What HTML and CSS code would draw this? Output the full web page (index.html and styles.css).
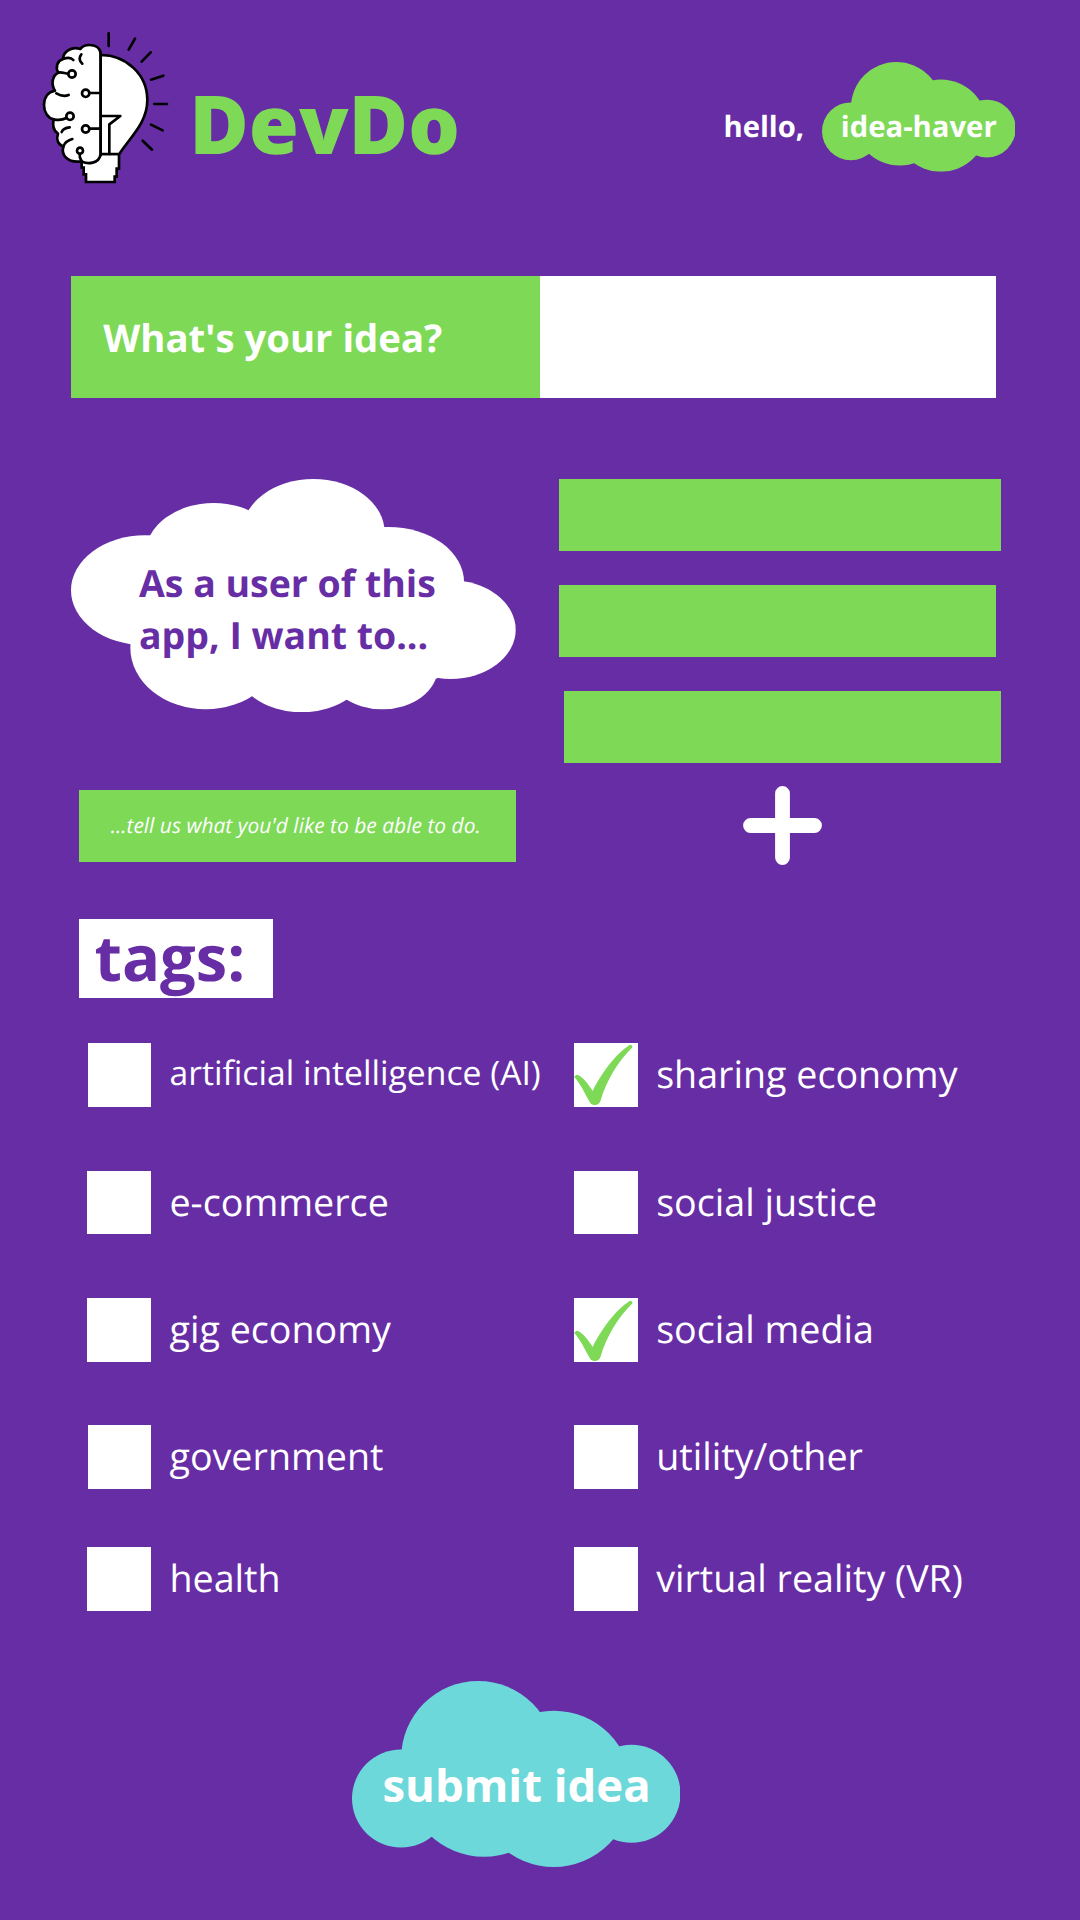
FILE: index.html
```
<!DOCTYPE html>
<html lang="en">
<head>
<meta charset="utf-8">
<title>DevDo</title>
<link rel="stylesheet" href="styles.css">
</head>
<body>
<svg class="defs" aria-hidden="true">
  <symbol id="cloud" viewBox="34.500 33 986 558">
    <circle cx="181.500" cy="385.500" r="147"/>
    <circle cx="413" cy="264" r="231"/>
    <circle cx="639.500" cy="356.500" r="234.500"/>
    <circle cx="873" cy="371.500" r="147"/>
    <circle cx="430" cy="325" r="235"/>
  </symbol>
  <symbol id="tick" viewBox="0 0 192 192">
    <path d="M0 101L6 97Q10 94 14 97C29 106 44 125 56 144C78 98 122 35 167 6Q170 4 172 6L175 10Q176 12 174 14C131 56 99 111 82 165C79 179 74 186 61 186C51 186 47 177 42 168C30 145 17 119 0 101Z"/>
  </symbol>
</svg>
<header class="header">
  <svg class="logo" viewBox="0 0 450 525" aria-hidden="true">
    <g fill="#fff" stroke="#000" stroke-width="8" stroke-linecap="round" stroke-linejoin="round">
      <path stroke-linejoin="miter" d="M155 420V443H161V463H168V486H254V470H260V446H267V402H212Z"/>
      <path d="M212 105C290 105 352 165 352 240C352 310 298 354 268 402H212Z"/>
      <path d="M212 100C210 84 196 75 178 75C167 75 157 79 151 87C126 79 100 93 99 117C82 122 75 142 85 158C67 166 62 193 75 212C53 216 42 234 42 255C42 277 54 294 71 298C67 317 71 333 84 341C78 358 84 373 100 380C93 404 111 430 155 424C172 433 207 433 212 402Z"/>
      <path fill="none" d="M99 117C113 112 124 113 130 120M154 103C146 113 147 122 157 131M85 158C92 155 104 160 114 161M79 220C91 227 103 230 116 225M71 298C84 301 98 300 109 294M95 336C99 326 108 323 119 322M100 380C103 369 113 361 127 357M149 403C148 411 151 418 155 424M179 219H211M179 326H211M213 288H271L238 313V402"/>
      <circle cx="126" cy="162" r="11"/>
      <circle cx="167" cy="220" r="11"/>
      <circle cx="120" cy="289" r="11"/>
      <circle cx="167" cy="327" r="11"/>
      <circle cx="150" cy="392" r="9"/>
      <path fill="none" d="M212 100V406"/>
      <path fill="none" d="M236 40V78M315 56L296 89M362 97L335 125M400 167L363 179M373 252H411M363 314L398 331M338 362L366 389"/>
    </g>
  </svg>
  <h1 class="brand">DevDo</h1>
  <p class="hello">hello,</p>
  <div class="user">
    <svg class="cloud cloud-user" aria-hidden="true"><use href="#cloud"/></svg>
    <span class="user-name">idea-haver</span>
  </div>
</header>
<main>
  <section class="idea">
    <label class="idea-label" for="idea">What's your idea?</label>
    <input class="idea-input" id="idea" type="text">
  </section>

  <section class="stories">
    <div class="prompt">
      <div class="bubble">
        <svg class="bubble-shape" viewBox="33 27 1334 700" preserveAspectRatio="none" aria-hidden="true">
          <path d="M269 196L569 123L973 171L1212 333L1132 625L858 689L574 677L211 523Z"/>
          <ellipse cx="255" cy="361" rx="222" ry="165"/>
          <ellipse cx="461" cy="251" rx="204" ry="152"/>
          <ellipse cx="760" cy="188" rx="214" ry="161"/>
          <ellipse cx="985" cy="336" rx="227" ry="165"/>
          <ellipse cx="1172" cy="479" rx="195" ry="148"/>
          <ellipse cx="437" cy="533" rx="226" ry="185"/>
          <ellipse cx="725" cy="577" rx="202" ry="150"/>
          <ellipse cx="967" cy="594" rx="166" ry="124"/>
        </svg>
        <p class="bubble-text">As a user of this<br>app, I want to...</p>
      </div>
      <div class="hint">...tell us what you'd like to be able to do.</div>
    </div>
    <div class="answers">
      <div class="answer"></div>
      <div class="answer answer-short"></div>
      <div class="answer answer-inset"></div>
      <svg class="plus" viewBox="0 0 79 79" role="img" aria-label="Add another">
        <path d="M39.500 7.500V71.500M7.500 39.500H71.500" stroke="#fff" stroke-width="14.800" stroke-linecap="round"/>
      </svg>
    </div>
  </section>

  <h2 class="tags-title">tags:</h2>
  <section class="tags">
    <div class="tag"><span class="box box-narrow"></span><span class="name name-small">artificial intelligence (AI)</span></div>
    <div class="tag"><span class="box"><svg class="tick"><use href="#tick"/></svg></span><span class="name">sharing economy</span></div>
    <div class="tag"><span class="box"></span><span class="name">e-commerce</span></div>
    <div class="tag"><span class="box"></span><span class="name">social justice</span></div>
    <div class="tag"><span class="box"></span><span class="name">gig economy</span></div>
    <div class="tag"><span class="box"><svg class="tick tick-low"><use href="#tick"/></svg></span><span class="name">social media</span></div>
    <div class="tag"><span class="box box-narrow"></span><span class="name">government</span></div>
    <div class="tag"><span class="box"></span><span class="name">utility/other</span></div>
    <div class="tag"><span class="box"></span><span class="name">health</span></div>
    <div class="tag"><span class="box"></span><span class="name">virtual reality (VR)</span></div>
  </section>

  <button class="submit" type="button">
    <svg class="cloud cloud-submit" aria-hidden="true"><use href="#cloud"/></svg>
    <span class="submit-text">submit idea</span>
  </button>
</main>
</body>
</html>
```
FILE: styles.css
```
* { box-sizing: border-box; margin: 0; padding: 0; }

body {
  width: 1080px;
  height: 1920px;
  overflow: hidden;
  background: #672da5;
  color: #fff;
  font-family: "Open Sans", sans-serif;
  text-rendering: geometricPrecision;
}

svg { display: block; }
.defs { position: absolute; width: 0; height: 0; }

/* Header */
.header {
  display: flex;
  align-items: flex-start;
  height: 276px;
  padding-left: 30px;
}
.logo { width: 150px; height: 175px; margin-top: 20px; }
.brand {
  width: 543.5px;
  padding: 68px 0 0 9.2px;
  color: #7ed957;
  font-size: 81.2px;
  font-weight: 800;
  line-height: 110px;
}
.hello {
  width: 98px;
  padding-top: 106px;
  font-size: 29.2px;
  font-weight: 700;
  line-height: 40px;
}
.user { display: grid; padding-top: 62px; }
.user > * { grid-area: 1 / 1; }
.cloud-user { width: 193.800px; height: 109.700px; fill: #7ed957; }
.user-name {
  padding: 44px 0 0 19.3px;
  font-size: 29.25px;
  font-weight: 700;
  line-height: 40px;
}

/* Idea field */
.idea {
  display: flex;
  height: 122px;
  margin-left: 70.7px;
}
.idea-label {
  width: 469.3px;
  padding: 1px 0 0 32.6px;
  background: #7ed957;
  font-size: 38.3px;
  font-weight: 700;
  line-height: 122px;
}
.idea-input { width: 456px; border: 0; background: #fff; }

/* User stories */
.stories {
  display: flex;
  margin: 81px 0 0 71px;
  height: 439.5px;
}
.prompt { width: 488.3px; }
.bubble { display: grid; height: 233.3px; }
.bubble > * { grid-area: 1 / 1; }
.bubble-shape { width: 444.7px; height: 233.3px; fill: #fff; }
.bubble-text {
  padding: 77.5px 0 0 68px;
  color: #672da5;
  font-size: 37.45px;
  font-weight: 700;
  line-height: 52px;
}
.hint {
  width: 437px;
  height: 72px;
  margin: 77.5px 0 0 8px;
  padding: .5px 0 0 31.7px;
  background: #7ed957;
  font-size: 20.97px;
  font-style: italic;
  line-height: 72px;
}
.answers { width: 442px; }
.answer { height: 72px; margin-bottom: 34px; background: #7ed957; }
.answer-short { width: 437px; margin-bottom: 33.5px; }
.answer-inset { width: 437px; margin: 0 0 23.5px 5px; }
.plus { width: 79px; height: 79px; margin-left: 183.7px; }

/* Tags */
.tags-title {
  width: 194px;
  height: 79.5px;
  margin-left: 79px;
  padding-left: 15.5px;
  background: #fff;
  color: #672da5;
  font-size: 63.2px;
  font-weight: 700;
  line-height: 75px;
}
.tags {
  display: grid;
  grid-template-columns: 486.7px 1fr;
  grid-template-rows: 127.5px 127.5px 127px 122px 63.6px;
  margin: 45px 0 0 87.3px;
}
.tag { display: flex; gap: 18.5px; height: 63.6px; }
.box { width: 63.7px; height: 63.6px; background: #fff; }
.box-narrow { width: 63px; margin-left: .7px; }
.tick { width: 64px; height: 64px; fill: #7ed957; }
.tick-low { margin-top: 1.2px; }
.name {
  margin-top: .2px;
  font-size: 37.65px;
  line-height: 63.6px;
  white-space: nowrap;
}
.name-small { margin-top: -2px; font-size: 33.7px; }

/* Submit */
.submit {
  display: grid;
  margin: 70.4px 0 0 351.5px;
  border: 0;
  background: none;
  color: inherit;
  font-family: inherit;
  text-align: left;
}
.submit > * { grid-area: 1 / 1; }
.cloud-submit { width: 328.7px; height: 186px; fill: #6cd8da; }
.submit-text {
  padding: 73.4px 0 0 31px;
  font-size: 45.45px;
  font-weight: 700;
  line-height: 60px;
}
```
